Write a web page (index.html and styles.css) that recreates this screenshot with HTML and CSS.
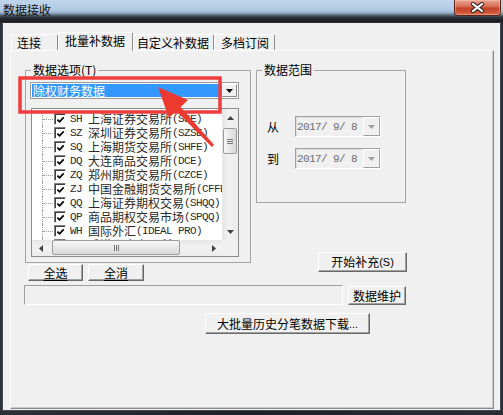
FILE: index.html
```html
<!DOCTYPE html>
<html lang="zh">
<head>
<meta charset="utf-8">
<title>数据接收</title>
<link rel="stylesheet" href="styles.css">
</head>
<body>
<div class="win">
  <div class="titlebar">
    <span class="title">数据接收</span>
    <div class="close">
      <svg width="15" height="11" viewBox="0 0 15 11"><path d="M3 2 L12 9 M12 2 L3 9" stroke="#3a2a28" stroke-width="4.2" stroke-linecap="round"/><path d="M3 2 L12 9 M12 2 L3 9" stroke="#fff" stroke-width="2.2" stroke-linecap="round"/></svg>
    </div>
  </div>
  <div class="client">
    <div class="tabs">
      <div class="tab t1">连接</div>
      <div class="tab active">批量补数据</div>
      <div class="tab t3">自定义补数据</div>
      <div class="tab t4">多档订阅</div>
    </div>
    <div class="panel">
      <div class="top">
        <div class="leftcol">
          <fieldset class="group g1">
            <legend>数据选项(T)</legend>
            <div class="combo">
              <div class="sel">除权财务数据</div>
              <div class="dropbtn"><svg width="7" height="4" viewBox="0 0 7 4"><path d="M0 0h7L3.5 4z" fill="#000"/></svg></div>
            </div>
            <div class="list">
              <div class="rows">
                <div class="row"><span class="tree"></span><span class="cb"><svg width="10" height="10" viewBox="0 0 10 10"><path d="M1.5 4.5 L4 7 L8.5 2" fill="none" stroke="#000" stroke-width="2"/></svg></span><span class="m">SH </span><span class="nm">上海证券交易所</span><span class="m">(SSE)</span></div>
                <div class="row"><span class="tree"></span><span class="cb"><svg width="10" height="10" viewBox="0 0 10 10"><path d="M1.5 4.5 L4 7 L8.5 2" fill="none" stroke="#000" stroke-width="2"/></svg></span><span class="m">SZ </span><span class="nm">深圳证券交易所</span><span class="m">(SZSE)</span></div>
                <div class="row"><span class="tree"></span><span class="cb"><svg width="10" height="10" viewBox="0 0 10 10"><path d="M1.5 4.5 L4 7 L8.5 2" fill="none" stroke="#000" stroke-width="2"/></svg></span><span class="m">SQ </span><span class="nm">上海期货交易所</span><span class="m">(SHFE)</span></div>
                <div class="row"><span class="tree"></span><span class="cb"><svg width="10" height="10" viewBox="0 0 10 10"><path d="M1.5 4.5 L4 7 L8.5 2" fill="none" stroke="#000" stroke-width="2"/></svg></span><span class="m">DQ </span><span class="nm">大连商品交易所</span><span class="m">(DCE)</span></div>
                <div class="row"><span class="tree"></span><span class="cb"><svg width="10" height="10" viewBox="0 0 10 10"><path d="M1.5 4.5 L4 7 L8.5 2" fill="none" stroke="#000" stroke-width="2"/></svg></span><span class="m">ZQ </span><span class="nm">郑州期货交易所</span><span class="m">(CZCE)</span></div>
                <div class="row"><span class="tree"></span><span class="cb"><svg width="10" height="10" viewBox="0 0 10 10"><path d="M1.5 4.5 L4 7 L8.5 2" fill="none" stroke="#000" stroke-width="2"/></svg></span><span class="m">ZJ </span><span class="nm">中国金融期货交易所</span><span class="m">(CFFEX)</span></div>
                <div class="row"><span class="tree"></span><span class="cb"><svg width="10" height="10" viewBox="0 0 10 10"><path d="M1.5 4.5 L4 7 L8.5 2" fill="none" stroke="#000" stroke-width="2"/></svg></span><span class="m">QQ </span><span class="nm">上海证券期权交易</span><span class="m">(SHQQ)</span></div>
                <div class="row"><span class="tree"></span><span class="cb"><svg width="10" height="10" viewBox="0 0 10 10"><path d="M1.5 4.5 L4 7 L8.5 2" fill="none" stroke="#000" stroke-width="2"/></svg></span><span class="m">QP </span><span class="nm">商品期权交易市场</span><span class="m">(SPQQ)</span></div>
                <div class="row"><span class="tree"></span><span class="cb"><svg width="10" height="10" viewBox="0 0 10 10"><path d="M1.5 4.5 L4 7 L8.5 2" fill="none" stroke="#000" stroke-width="2"/></svg></span><span class="m">WH </span><span class="nm">国际外汇</span><span class="m">(IDEAL PRO)</span></div>
                <div class="row"><span class="tree"></span><span class="cb"><svg width="10" height="10" viewBox="0 0 10 10"><path d="M1.5 4.5 L4 7 L8.5 2" fill="none" stroke="#000" stroke-width="2"/></svg></span><span class="m">HK </span><span class="nm">香港联合交易所</span><span class="m">(HKEX)</span></div>
              </div>
              <div class="vscroll">
                <div class="sbtn"><svg width="7" height="4" viewBox="0 0 7 4"><path d="M0 4h7L3.5 0z" fill="#404040"/></svg></div>
                <div class="vthumb"><span class="vgrip"></span></div>
                <div class="sfill"></div>
                <div class="sbtn"><svg width="7" height="4" viewBox="0 0 7 4"><path d="M0 0h7L3.5 4z" fill="#404040"/></svg></div>
              </div>
              <div class="hscroll">
                <div class="hbtn"><svg width="4" height="7" viewBox="0 0 4 7"><path d="M4 0v7L0 3.5z" fill="#404040"/></svg></div>
                <div class="hthumb"><span class="hgrip"></span></div>
                <div class="sfill"></div>
                <div class="hbtn"><svg width="4" height="7" viewBox="0 0 4 7"><path d="M0 0v7L4 3.5z" fill="#404040"/></svg></div>
              </div>
              <div class="corner"></div>
            </div>
          </fieldset>
          <div class="btnrow">
            <button class="btn b-all"><u>全选</u></button>
            <button class="btn b-none"><u>全消</u></button>
          </div>
        </div>
        <div class="rightcol">
          <fieldset class="group g2">
            <legend>数据范围</legend>
            <div class="daterow first">
              <span class="dl">从</span>
              <div class="date"><span class="dv">2017/ 9/ 8</span><span class="ddb"><svg width="7" height="4" viewBox="0 0 7 4"><path d="M0 0h7L3.5 4z" fill="#a0a0a0"/></svg></span></div>
            </div>
            <div class="daterow">
              <span class="dl">到</span>
              <div class="date"><span class="dv">2017/ 9/ 8</span><span class="ddb"><svg width="7" height="4" viewBox="0 0 7 4"><path d="M0 0h7L3.5 4z" fill="#a0a0a0"/></svg></span></div>
            </div>
          </fieldset>
          <button class="btn b-start">开始补充<span class="lat">(S)</span></button>
        </div>
      </div>
      <div class="row2">
        <div class="progress"></div>
        <button class="btn b-maint">数据维护</button>
      </div>
      <div class="row3">
        <button class="btn b-big">大批量历史分笔数据下载<span class="lat">...</span></button>
      </div>
    </div>
  </div>
  <svg class="annot" width="503" height="415" viewBox="0 0 503 415">
    <rect x="20" y="78" width="200" height="34" fill="none" stroke="#f03c3c" stroke-width="3.5"/>
    <polygon points="158,87 188,100 180.6,106.9 214.1,145 211.9,147 176.2,110.9 168.9,117.7" fill="#ec3a30"/>
  </svg>
</div>
</body>
</html>
```
FILE: styles.css
```css
* { box-sizing: border-box; }
html, body { margin: 0; padding: 0; }
body {
  width: 503px;
  height: 415px;
  overflow: hidden;
  background: #1f242a;
  font-family: "Noto Sans CJK SC", "Noto Sans", sans-serif;
  font-size: 12px;
  color: #000;
}
.win {
  position: relative;
  width: 503px;
  height: 415px;
  background: linear-gradient(to right, #2c3137, #1c2025 50%, #2a2e34);
}
.titlebar {
  height: 22px;
  display: flex;
  justify-content: space-between;
  align-items: flex-start;
  background: linear-gradient(to bottom, #c0d6ec 0, #b2cbe5 9px, #a2bcd7 12px, #7b8ea3 14px, #434d5a 16px, #262b32 18px, #181b20 22px);
}
.title {
  margin: 2px 0 0 3px;
  font-size: 12px;
  line-height: 15px;
  color: #111;
}
.close {
  width: 47px;
  height: 16px;
  margin-right: 2px;
  border: 1px solid #5a2418;
  border-top: none;
  border-radius: 0 0 4px 4px;
  background: linear-gradient(to bottom, #e9a392 0, #d8735a 40%, #c4432b 55%, #cc5236 80%, #d9714f 100%);
  box-shadow: inset 0 0 0 1px rgba(255, 220, 210, 0.35);
  display: flex;
  align-items: center;
  justify-content: center;
}
.client {
  margin: 0 2px;
  height: 389px;
  border: 1px solid #454b52;
  border-top-color: #2a2f35;
  background: #f0f0f0;
  padding: 9px 0 0 7px;
}
.tabs {
  position: relative;
  z-index: 1;
  display: flex;
  align-items: flex-end;
  height: 19px;
  margin-bottom: -1px;
  padding-left: 1px;
}
.tab {
  height: 16px;
  margin-bottom: 1px;
  border: 1px solid;
  border-color: #fff #8c8c8c transparent #fff;
  border-bottom: none;
  border-radius: 2px 2px 0 0;
  background: #f0f0f0;
  font-size: 12px;
  line-height: 15px;
  white-space: nowrap;
}
.t1 { width: 47px; padding-left: 5px; }
.tab.active { width: 75px; height: 19px; margin-bottom: 0; padding-left: 6px; line-height: 16px; }
.t3 { width: 81px; padding-left: 3px; }
.t4 { width: 61px; padding-left: 6px; }
.panel {
  width: 484px;
  height: 359px;
  border: 1px solid;
  border-color: #fff #8c8c8c #8c8c8c #fff;
  box-shadow: inset -1px -1px 0 #c8c8c8;
  padding: 12px 0 0 13px;
}
.top { display: flex; align-items: flex-start; }
.leftcol { width: 226px; margin-left: 1px; }
.rightcol {
  width: 151px;
  margin-left: 5px;
  display: flex;
  flex-direction: column;
  align-items: flex-end;
}
.group {
  margin: 0;
  padding: 0;
  min-width: 0;
  border: 1px solid #a4a4a4;
}
.group legend {
  margin-left: 5px;
  padding: 0 2px;
  font-size: 12px;
  line-height: 14px;
}
.g1 { width: 226px; padding-bottom: 5px; }
.g2 { width: 150px; align-self: flex-start; padding-bottom: 33px; }
.combo {
  width: 209px;
  height: 17px;
  margin: 5px 0 0 4px;
  border: 1px solid #9a9a9a;
  background: #fff;
  padding: 1px;
  display: flex;
}
.sel {
  flex: 1;
  background: #3399ff;
  color: #fff;
  font-size: 12px;
  line-height: 13px;
  padding-left: 1px;
}
.dropbtn {
  width: 15px;
  display: flex;
  align-items: center;
  justify-content: center;
  background: #f0f0f0;
  border: 1px solid;
  border-color: #fff #8c8c8c #8c8c8c #fff;
}
.list {
  width: 208px;
  height: 149px;
  margin: 9px 0 0 5px;
  border: 1px solid #8c8c8c;
  background: #fff;
  display: grid;
  grid-template-columns: 190px 16px;
  grid-template-rows: 131px 16px;
}
.rows {
  overflow: hidden;
  padding-top: 3px;
}
.row {
  display: flex;
  align-items: center;
  height: 14px;
  padding-left: 10px;
  white-space: nowrap;
  color: #2a2a2a;
}
.tree {
  position: relative;
  width: 11px;
  height: 14px;
  flex: none;
  border-left: 1px dotted #9a9a9a;
}
.tree::after {
  content: "";
  position: absolute;
  left: 0;
  top: 7px;
  width: 10px;
  border-top: 1px dotted #9a9a9a;
}
.cb {
  flex: none;
  width: 12px;
  height: 12px;
  margin: 0 4px 0 1px;
  border: 1px solid;
  border-color: #808080 #fff #fff #808080;
  box-shadow: inset 1px 1px 0 #404040;
  background: #fff;
  display: flex;
  align-items: center;
  justify-content: center;
  padding: 1px 0 0 1px;
}
.m {
  font-family: "Liberation Mono", monospace;
  font-size: 11px;
  line-height: 14px;
  letter-spacing: -0.6px;
  white-space: pre;
}
.nm { font-size: 12px; line-height: 14px; }
.vscroll {
  display: flex;
  flex-direction: column;
  background: linear-gradient(to right, #e6e6e6, #f2f2f2 40%, #ececec);
  border-left: 1px solid #e8e8e8;
}
.sbtn {
  height: 17px;
  display: flex;
  align-items: center;
  justify-content: center;
}
.sfill { flex: 1; }
.vthumb {
  width: 14px;
  height: 26px;
  margin: 2px 0 0 0;
  border: 1px solid #9c9c9c;
  border-radius: 2px;
  background: linear-gradient(to right, #f6f6f6, #e8e8e8 50%, #d8d8d8);
  display: flex;
  align-items: center;
  justify-content: center;
}
.vgrip {
  width: 6px;
  height: 5px;
  background: repeating-linear-gradient(to bottom, #767676 0 1px, transparent 1px 2px);
}
.hscroll {
  display: flex;
  background: linear-gradient(to bottom, #e6e6e6, #f2f2f2 40%, #ececec);
}
.hbtn {
  width: 17px;
  display: flex;
  align-items: center;
  justify-content: center;
}
.hthumb {
  width: 128px;
  height: 15px;
  margin-left: 3px;
  border: 1px solid #9c9c9c;
  border-radius: 2px;
  background: linear-gradient(to bottom, #f6f6f6, #e8e8e8 50%, #d8d8d8);
  display: flex;
  align-items: center;
  justify-content: center;
}
.hgrip {
  width: 5px;
  height: 6px;
  background: repeating-linear-gradient(to right, #767676 0 1px, transparent 1px 2px);
}
.corner { background: #f0f0f0; }
.btn {
  font-family: "Noto Sans CJK SC", "Noto Sans", sans-serif;
  font-size: 12px;
  line-height: 14px;
  color: #000;
  background: #f0f0f0;
  border: 1px solid;
  border-color: #fff #696969 #696969 #fff;
  box-shadow: inset -1px -1px 0 #a0a0a0;
  padding: 0;
  display: flex;
  align-items: center;
  justify-content: center;
  white-space: nowrap;
}
.btn u { text-underline-offset: 2px; }
.lat { font-family: "Liberation Sans", sans-serif; font-size: 11px; }
.btnrow {
  display: flex;
  gap: 5px;
  margin-top: 1px;
  padding-left: 3px;
}
.b-all { width: 55px; height: 17px; }
.b-none { width: 56px; height: 17px; }
.daterow {
  display: flex;
  align-items: center;
  gap: 16px;
  padding-left: 10px;
  margin-top: 11px;
}
.daterow.first { margin-top: 39px; }
.dl { font-size: 12px; line-height: 14px; width: 12px; }
.date {
  width: 86px;
  height: 21px;
  border: 1px solid;
  border-color: #a0a0a0 #fff #fff #a0a0a0;
  box-shadow: inset 1px 1px 0 #dcdcdc;
  background: #f0f0f0;
  display: flex;
  align-items: center;
  justify-content: space-between;
  padding-left: 1px;
}
.dv {
  font-family: "Liberation Mono", monospace;
  font-size: 11px;
  line-height: 14px;
  letter-spacing: -0.6px;
  color: #6d6d6d;
  white-space: pre;
}
.ddb {
  width: 17px;
  height: 19px;
  border: 1px solid;
  border-color: #fff #a0a0a0 #a0a0a0 #fff;
  display: flex;
  align-items: center;
  justify-content: center;
}
.b-start { width: 89px; height: 20px; margin-top: 49px; }
.row2 { display: flex; align-items: flex-start; margin-top: 4px; }
.progress {
  width: 319px;
  height: 20px;
  border: 1px solid;
  border-color: #a0a0a0 #fff #fff #a0a0a0;
  background: #f0f0f0;
}
.b-maint { width: 58px; height: 19px; margin: 1px 0 0 5px; }
.row3 { margin-top: 8px; padding-left: 181px; }
.b-big { width: 165px; height: 21px; }
.annot {
  position: absolute;
  left: 0;
  top: 0;
  pointer-events: none;
}
```
